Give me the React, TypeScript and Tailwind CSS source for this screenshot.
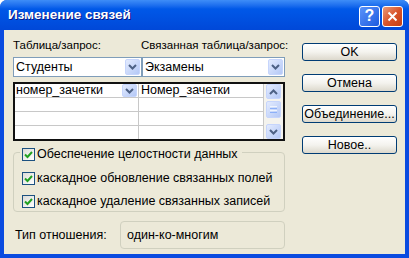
import React from 'react';

// chevron used by the combo / scroll buttons
function Chevron({ up = false }: { up?: boolean }) {
  return (
    <svg width="9" height="6" viewBox="0 0 9 6">
      <path
        d={up ? 'M1 5 L4.5 1.5 L8 5' : 'M1 1 L4.5 4.5 L8 1'}
        stroke="#4D6185"
        strokeWidth="2"
        fill="none"
      />
    </svg>
  );
}

function DropBtn({ className = '' }: { className?: string }) {
  return (
    <div
      className={`flex items-center justify-center rounded-[2px] border border-[#C6D5FC] bg-gradient-to-br from-[#E3EBFE] to-[#B4C8F6] ${className}`}
    >
      <Chevron />
    </div>
  );
}

function Combo({ text, width }: { text: string; width: string }) {
  return (
    <div className={`${width} h-[20px] flex items-center bg-white border border-[#7F9DB9]`}>
      <span className="flex-1 pl-[2px] leading-[18px] whitespace-nowrap">{text}</span>
      <DropBtn className="w-[15px] h-[16px] mr-px" />
    </div>
  );
}

function CheckBox() {
  return (
    <div className="w-[13px] h-[13px] shrink-0 border border-[#1C5180] bg-gradient-to-br from-[#DCDCD7] to-white flex items-center justify-center">
      <svg width="9" height="9" viewBox="0 0 9 9">
        <path d="M1 4.5 L3.5 7 L8 2" stroke="#21A121" strokeWidth="2" fill="none" />
      </svg>
    </div>
  );
}

function XpButton({ label }: { label: string }) {
  return (
    <div className="h-[18px] w-[95px] flex items-center justify-center rounded-[3px] border border-[#003C74] bg-gradient-to-b from-white via-[#F4F3EE] to-[#DCD8CC] leading-none whitespace-nowrap">
      {label}
    </div>
  );
}

export default function App() {
  const rows = [0, 1, 2, 3];

  return (
    <div className="w-[409px] h-[258px] bg-white font-['Liberation_Sans',Arial,sans-serif] text-[12.5px] text-black">
      <div className="w-full h-full flex flex-col rounded-t-[7px] bg-[#0A4BE0] overflow-hidden">
        {/* title bar */}
        <div className="h-[30px] flex items-center pl-[8px] pr-[6px] bg-gradient-to-b from-[#3E8DF7] via-[#0058E8] via-30% to-[#0048D8]">
          <span className="flex-1 text-white font-bold text-[13.5px] [text-shadow:1px_1px_#0A1883] whitespace-nowrap">
            Изменение связей
          </span>
          <div className="w-[21px] h-[21px] mt-[2px] rounded-[3px] border border-white bg-gradient-to-br from-[#5A93FA] to-[#1E5ADF] flex items-center justify-center text-white font-bold text-[16px] leading-none">
            ?
          </div>
          <div className="w-[21px] h-[21px] mt-[2px] ml-[2px] rounded-[3px] border border-white bg-gradient-to-br from-[#E89A78] via-[#D9542A] to-[#C43E10] flex items-center justify-center">
            <svg width="11" height="11" viewBox="0 0 11 11">
              <path d="M1.5 1.5 L9.5 9.5 M9.5 1.5 L1.5 9.5" stroke="white" strokeWidth="2" />
            </svg>
          </div>
        </div>

        {/* client area */}
        <div className="flex-1 mx-[4px] mb-[4px] bg-[#ECE9D8] flex pl-[9px] pr-[8px]">
          <div className="w-[272px] flex flex-col">
            <div className="mt-[8px] h-[14px] flex leading-[14px] whitespace-nowrap text-[11.5px]">
              <span className="w-[128px] shrink-0">Таблица/запрос:</span>
              <span>Связанная таблица/запрос:</span>
            </div>

            <div className="mt-[5px] flex">
              <Combo text="Студенты" width="w-[129px]" />
              <Combo text="Экзамены" width="w-[143px]" />
            </div>

            {/* field grid */}
            <div className="mt-[5px] border-2 border-[#111] bg-white flex">
              <div className="w-[124px] flex flex-col border-r border-[#C8C8C8]">
                {rows.map((r) => (
                  <div
                    key={r}
                    className={`flex items-center ${r < 3 ? 'h-[14px] border-b border-[#C8C8C8]' : 'h-[13px]'}`}
                  >
                    {r === 0 && (
                      <>
                        <span className="flex-1 pl-px leading-[13px] whitespace-nowrap">номер_зачетки</span>
                        <DropBtn className="w-[15px] h-[13px] mr-px" />
                      </>
                    )}
                  </div>
                ))}
              </div>
              <div className="w-[125px] flex flex-col border-r border-[#C8C8C8]">
                {rows.map((r) => (
                  <div
                    key={r}
                    className={`flex items-center ${r < 3 ? 'h-[14px] border-b border-[#C8C8C8]' : 'h-[13px]'}`}
                  >
                    {r === 0 && <span className="pl-[2px] leading-[13px] whitespace-nowrap">Номер_зачетки</span>}
                  </div>
                ))}
              </div>
              {/* scrollbar */}
              <div className="flex-1 bg-[#F4F3EE] flex flex-col items-center justify-between">
                <div className="w-[15px] flex flex-col items-center">
                  <div className="w-[15px] h-[15px] rounded-[2px] border border-[#C6D5FC] bg-gradient-to-br from-[#E3EBFE] to-[#B4C8F6] flex items-center justify-center">
                    <Chevron up />
                  </div>
                  <div className="mt-[2px] w-[15px] h-[17px] rounded-[2px] border border-[#C6D5FC] bg-gradient-to-br from-[#E3EBFE] to-[#B4C8F6] flex flex-col items-center justify-center gap-[1px]">
                    <div className="w-[7px] h-px bg-[#EEF4FE]" />
                    <div className="w-[7px] h-px bg-[#8CB0F8]" />
                    <div className="w-[7px] h-px bg-[#EEF4FE]" />
                    <div className="w-[7px] h-px bg-[#8CB0F8]" />
                  </div>
                </div>
                <div className="w-[15px] h-[15px] rounded-[2px] border border-[#C6D5FC] bg-gradient-to-br from-[#E3EBFE] to-[#B4C8F6] flex items-center justify-center">
                  <Chevron />
                </div>
              </div>
            </div>

            {/* integrity group */}
            <div className="mt-[11px] h-[60px] border border-[#D0D0BF] rounded-[4px] flex flex-col whitespace-nowrap">
              <div className="-mt-[5px] ml-[6px] self-start flex items-center h-[13px] bg-[#ECE9D8] px-[2px] pr-[4px]">
                <CheckBox />
                <span className="ml-[2px] leading-[13px]">Обеспечение целостности данных</span>
              </div>
              <div className="mt-[11px] ml-[8px] flex items-center h-[13px]">
                <CheckBox />
                <span className="ml-[2px] leading-[13px]">каскадное обновление связанных полей</span>
              </div>
              <div className="mt-[10px] ml-[8px] flex items-center h-[13px]">
                <CheckBox />
                <span className="ml-[2px] leading-[13px]">каскадное удаление связанных записей</span>
              </div>
            </div>

            <div className="mt-[9px] h-[28px] flex items-center whitespace-nowrap">
              <span className="w-[107px] shrink-0 pl-[2px]">Тип отношения:</span>
              <div className="w-[165px] h-[28px] border border-[#D0D0BF] rounded-[4px] flex items-center pl-[6px]">
                один-ко-многим
              </div>
            </div>
          </div>

          <div className="ml-[17px] mt-[13px] flex flex-col gap-[13px]">
            <XpButton label="OK" />
            <XpButton label="Отмена" />
            <XpButton label="Объединение..." />
            <XpButton label="Новое.." />
          </div>
        </div>
      </div>
    </div>
  );
}
